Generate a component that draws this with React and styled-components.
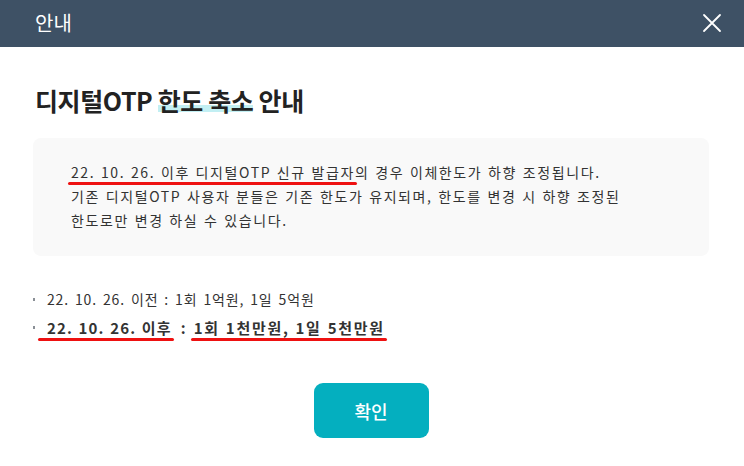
import React from 'react'
import styled, { createGlobalStyle } from 'styled-components'

const GlobalStyle = createGlobalStyle`
  html, body {
    margin: 0;
    padding: 0;
    background: #ffffff;
  }
  body {
    font-family: 'Noto Sans CJK KR', 'Noto Sans', sans-serif;
  }
`

const App = () => {
  return (
    <>
      <GlobalStyle />
      <Modal>
        <Header>
          <HeaderTitle>안내</HeaderTitle>
          <CloseButton aria-label='닫기'>
            <svg width='20' height='20' viewBox='0 0 20 20'>
              <path d='M2 2 L18 18 M18 2 L2 18' stroke='#ffffff' strokeWidth='1.8' strokeLinecap='round' />
            </svg>
          </CloseButton>
        </Header>
        <Body>
          <Title>
            디지털OTP <Highlight>한도 축소</Highlight> 안내
          </Title>
          <InfoBox>
            <p>
              <Marked>22. 10. 26. 이후 디지털OTP 신규 발급자</Marked>의 경우 이체한도가 하향 조정됩니다.
              <br />
              기존 디지털OTP 사용자 분들은 기존 한도가 유지되며, 한도를 변경 시 하향 조정된
              <br />
              한도로만 변경 하실 수 있습니다.
            </p>
          </InfoBox>
          <List>
            <Item>22. 10. 26. 이전 : 1회 1억원, 1일 5억원</Item>
            <Item $strong>
              <Marked $wide>22. 10. 26. 이후</Marked>
              <Colon>:</Colon>
              <Marked $loose>1회 1천만원, 1일 5천만원</Marked>
            </Item>
          </List>
          <Footer>
            <ConfirmButton>확인</ConfirmButton>
          </Footer>
        </Body>
      </Modal>
    </>
  )
}

const Modal = styled.div`
  width: 744px;
  height: 466px;
  background: #ffffff;
  display: flex;
  flex-direction: column;
`

const Header = styled.div`
  box-sizing: border-box;
  height: 47px;
  background: #3e5165;
  display: flex;
  align-items: center;
  justify-content: space-between;
  padding: 0 22px 2px 35px;
`

const HeaderTitle = styled.div`
  flex: none;
  color: #ffffff;
  font-size: 20px;
  font-weight: 400;
  line-height: 1;
`

const CloseButton = styled.button`
  flex: none;
  border: 0;
  background: none;
  padding: 0;
  width: 20px;
  height: 20px;
  display: flex;
  cursor: pointer;
`

const Body = styled.div`
  padding: 36px 35px 0 33px;
  display: flex;
  flex-direction: column;
`

const Title = styled.h2`
  margin: 0 0 0 2px;
  font-size: 25px;
  font-weight: 700;
  color: #222222;
  line-height: 34px;
  letter-spacing: -0.4px;
`

const Highlight = styled.span`
  background: linear-gradient(to bottom, transparent 64%, #c2eff3 64%, #c2eff3 84%, transparent 84%);
`

const InfoBox = styled.div`
  margin-top: 21px;
  background: #f9f9f9;
  border-radius: 8px;
  padding: 22px 20px 24px 38px;
  p {
    margin: 0;
    font-family: 'Noto Sans CJK KR', 'Noto Sans', sans-serif;
    font-size: 14px;
    line-height: 24px;
    color: #333333;
    letter-spacing: 1.6px;
    word-spacing: 1px;
  }
`

const Marked = styled.span`
  position: relative;
  letter-spacing: ${p => (p.$loose ? '1.7px' : 'inherit')};
  &::after {
    content: '';
    position: absolute;
    left: ${p => (p.$wide ? '-9px' : '-3px')};
    right: -2px;
    bottom: -3px;
    height: 3px;
    border-radius: 2px;
    background: #ee1111;
  }
`

const Colon = styled.span`
  display: inline-block;
  margin: 0 7px 0 9px;
`

const List = styled.ul`
  list-style: none;
  margin: 32px 0 0;
  padding: 0;
  display: flex;
  flex-direction: column;
  gap: 5px;
`

const Item = styled.li`
  position: relative;
  padding-left: 14px;
  font-size: ${p => (p.$strong ? '15px' : '14px')};
  font-weight: ${p => (p.$strong ? 700 : 400)};
  line-height: 23px;
  color: #333333;
  letter-spacing: ${p => (p.$strong ? '1.15px' : '0.85px')};
  word-spacing: ${p => (p.$strong ? '1px' : '2px')};
  &::before {
    content: '';
    position: absolute;
    left: 0;
    top: 10px;
    width: 2px;
    height: 3px;
    background: #8a8f96;
  }
`

const Footer = styled.div`
  margin-top: 44px;
  display: flex;
  justify-content: center;
`

const ConfirmButton = styled.button`
  width: 115px;
  height: 55px;
  border: 0;
  border-radius: 9px;
  background: #04afbf;
  color: #ffffff;
  font-family: 'Noto Sans CJK KR', 'Noto Sans', sans-serif;
  font-size: 18px;
  font-weight: 500;
  cursor: pointer;
`

export default App
